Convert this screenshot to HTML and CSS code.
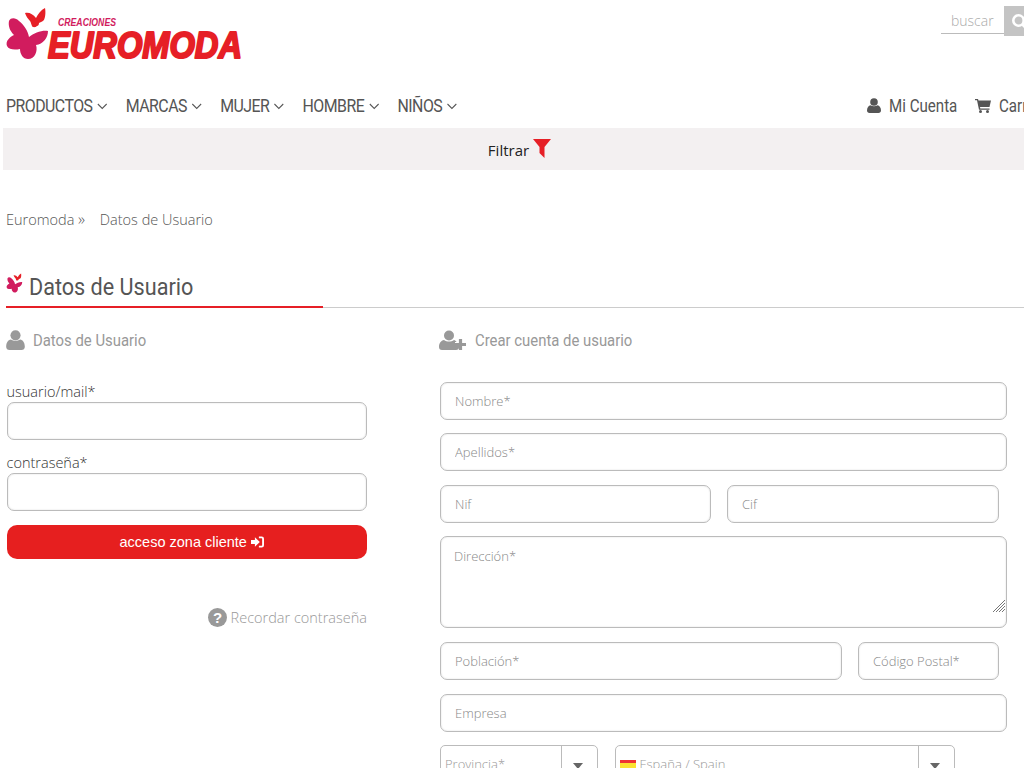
FILE: index.html
```html
<!DOCTYPE html>
<html lang="es">
<head>
    <meta charset="UTF-8">
    <title>Datos de Usuario | Euromoda</title>
    <link rel="stylesheet" href="styles.css">
</head>
<body>
    <header class="top">
        <svg class="logo" width="250" height="70" viewBox="0 0 250 70">
            <path fill="#d11c5e" d="M9 21C11 17 16 18 19 21C24 25 28 31 29 37C34 33 42 30 48 31C48 38 43 44 36 45C38 51 35 59 28 59C23 59 20 54 20 49C15 50 9 50 7 46C5 41 10 37 14 35C10 31 8 26 9 21Z"/>
            <path fill="#e61f26" d="M25 13C29 12 33 14 36 18C38 14 41 10 45 8C46 13 45 18 44 20C42 22 40 22 39 23C39 25 38 26 37 26C35 28 32 27 32 26C31 24 31 22 30 21C28 19 26 16 25 13Z"/>
            <text class="logo-small" x="58" y="26" textLength="58" lengthAdjust="spacingAndGlyphs">CREACIONES</text>
            <text class="logo-big" x="48" y="58" textLength="194" lengthAdjust="spacingAndGlyphs">EUROMODA</text>
        </svg>
        <div class="search">
            <span class="search-text">buscar</span>
            <span class="search-btn">
                <svg width="18" height="18" viewBox="0 0 18 18"><circle cx="7.500" cy="7.500" r="5.200" fill="none" stroke="#fff" stroke-width="2.600"/><path d="M11.500 11.500l5.500 5.500" stroke="#fff" stroke-width="3"/></svg>
            </span>
        </div>
    </header>

    <nav class="menu">
        <ul class="menu-main">
            <li>PRODUCTOS <svg class="chev" width="12" height="7" viewBox="0 0 12 7"><path d="M1 1l5 4.500L11 1" fill="none" stroke="#555" stroke-width="1.200"/></svg></li>
            <li>MARCAS <svg class="chev" width="12" height="7" viewBox="0 0 12 7"><path d="M1 1l5 4.500L11 1" fill="none" stroke="#555" stroke-width="1.200"/></svg></li>
            <li>MUJER <svg class="chev" width="12" height="7" viewBox="0 0 12 7"><path d="M1 1l5 4.500L11 1" fill="none" stroke="#555" stroke-width="1.200"/></svg></li>
            <li>HOMBRE <svg class="chev" width="12" height="7" viewBox="0 0 12 7"><path d="M1 1l5 4.500L11 1" fill="none" stroke="#555" stroke-width="1.200"/></svg></li>
            <li>NIÑOS <svg class="chev" width="12" height="7" viewBox="0 0 12 7"><path d="M1 1l5 4.500L11 1" fill="none" stroke="#555" stroke-width="1.200"/></svg></li>
        </ul>
        <div class="menu-user">
            <span class="menu-link">
                <svg width="14" height="15" viewBox="0 0 14 15"><circle cx="7" cy="4" r="3.800" fill="#555"/><path fill="#555" d="M0 12.500C0 9.500 1.500 7.500 3.500 7.200C5.500 8.600 8.500 8.600 10.500 7.200C12.500 7.500 14 9.500 14 12.500C14 14 13 15 11.500 15H2.500C1 15 0 14 0 12.500Z"/></svg>
                <span class="narrow link-account">Mi Cuenta</span>
            </span>
            <span class="menu-link">
                <svg width="16" height="15" viewBox="0 0 16 15"><path fill="#555" d="M0 1h3l.5 1.500H16l-1.500 6.500H5l.3 1.500h9.200v1.300H4L2 2.300H0Z"/><circle cx="5.500" cy="13.500" r="1.500" fill="#555"/><circle cx="12.500" cy="13.500" r="1.500" fill="#555"/></svg>
                <span class="narrow link-cart">Carrito</span>
            </span>
        </div>
    </nav>

    <div class="filter">
        <span>Filtrar</span>
        <svg width="18" height="19" viewBox="0 0 18 19"><path fill="#e61f26" d="M0 0h18L11.500 8v11L6.500 14V8Z"/></svg>
    </div>

    <p class="crumbs">Euromoda <span class="crumb-sep">»</span> <span class="crumb-now">Datos de Usuario</span></p>

    <div class="page-title">
        <h1>
            <svg width="17" height="20" viewBox="6 7 43 53"><path fill="#d11c5e" d="M9 21C11 17 16 18 19 21C24 25 28 31 29 37C34 33 42 30 48 31C48 38 43 44 36 45C38 51 35 59 28 59C23 59 20 54 20 49C15 50 9 50 7 46C5 41 10 37 14 35C10 31 8 26 9 21Z"/><path fill="#e61f26" d="M25 13C29 12 33 14 36 18C38 14 41 10 45 8C46 13 45 18 44 20C42 22 40 22 39 23C39 25 38 26 37 26C35 28 32 27 32 26C31 24 31 22 30 21C28 19 26 16 25 13Z"/></svg>
            <span class="narrow-title">Datos de Usuario</span>
        </h1>
    </div>

    <main class="columns">
        <section class="login">
            <h2>
                <svg width="19" height="20" viewBox="0 0 14 15"><circle cx="7" cy="4" r="3.800" fill="#999"/><path fill="#999" d="M0 12.500C0 9.500 1.500 7.500 3.500 7.200C5.500 8.600 8.500 8.600 10.500 7.200C12.500 7.500 14 9.500 14 12.500C14 14 13 15 11.500 15H2.500C1 15 0 14 0 12.500Z"/></svg>
                <span class="narrow-head">Datos de Usuario</span>
            </h2>
            <label class="field-label">usuario/mail*</label>
            <input class="box" type="text">
            <label class="field-label second">contraseña*</label>
            <input class="box" type="password">
            <button class="access" type="button">
                acceso zona cliente
                <svg width="13" height="12" viewBox="0 0 14 12"><path fill="#fff" d="M0 3.800h4.200V.8L9.500 6 4.200 11.200V8.200H0Z"/><path fill="none" stroke="#fff" stroke-width="2" d="M8.500 1H11.500C12.500 1 13 1.500 13 2.500V9.500C13 10.500 12.500 11 11.500 11H8.500"/></svg>
            </button>
            <p class="remember">
                <svg width="19" height="19" viewBox="0 0 19 19"><circle cx="9.500" cy="9.500" r="9.500" fill="#999"/><text class="q-mark" x="9.500" y="15">?</text></svg>
                Recordar contraseña
            </p>
        </section>

        <section class="signup">
            <h2>
                <svg width="28" height="20" viewBox="0 0 28 20"><circle cx="10" cy="5.500" r="5" fill="#999"/><path fill="#999" d="M0 17C0 13 2 10.500 5 10C8 12 12 12 15 10C16 10.300 17 11 17.500 12H16V14H20V17.500C20 19 19 20 17 20H3C1 20 0 19 0 17Z"/><path stroke="#999" stroke-width="3.200" d="M21.500 9v11M16 14.500h11"/></svg>
                <span class="narrow-head">Crear cuenta de usuario</span>
            </h2>
            <input class="box full" type="text" placeholder="Nombre*">
            <input class="box full" type="text" placeholder="Apellidos*">
            <div class="row">
                <input class="box w-nif" type="text" placeholder="Nif">
                <input class="box w-cif" type="text" placeholder="Cif">
            </div>
            <div class="area-wrap">
                <textarea class="box full area" placeholder="Dirección*"></textarea>
                <svg class="grip" width="14" height="14" viewBox="0 0 14 14"><path d="M13 1L1 13M13 4L4 13M13 7L7 13M13 10L10 13" stroke="#777" stroke-width="1"/></svg>
            </div>
            <div class="row">
                <input class="box w-pob" type="text" placeholder="Población*">
                <input class="box w-cp" type="text" placeholder="Código Postal*">
            </div>
            <input class="box full" type="text" placeholder="Empresa">
            <div class="row">
                <div class="picker w-prov">
                    <span class="picker-text">Provincia*</span>
                    <span class="picker-arrow"></span>
                </div>
                <div class="picker w-pais">
                    <span class="picker-text">
                        <svg class="flag" width="16" height="11" viewBox="0 0 16 11"><rect width="16" height="11" fill="#ee3333"/><rect y="3" width="16" height="5" fill="#fbe231"/></svg>
                        España / Spain
                    </span>
                    <span class="picker-arrow"></span>
                </div>
            </div>
        </section>
    </main>
</body>
</html>
```

FILE: styles.css
```css
html, body {
    height: 768px;
    overflow: hidden;
}

body {
    margin: 0;
    width: 1024px;
    background-color: #fff;
    color: #555;
    font-family: "Open Sans", sans-serif;
}

/* header */
.top {
    display: flex;
    justify-content: space-between;
    height: 85px;
}

.logo {
    display: block;
}

.logo-small {
    font: italic bold 11px "Liberation Sans", sans-serif;
    fill: #d11c5e;
}

.logo-big {
    font: italic bold 37px "Liberation Sans", sans-serif;
    fill: #e61f26;
    stroke: #e61f26;
    stroke-width: 2.200px;
    stroke-linejoin: round;
}

.search {
    display: flex;
    align-items: flex-start;
    padding-top: 6px;
    height: 30px;
}

.search-text {
    width: 63px;
    height: 28px;
    box-sizing: border-box;
    padding: 5px 0 0 10px;
    border-bottom: 1px solid #bbb;
    color: #aaa;
    font-size: 14px;
    font-weight: 300;
}

.search-btn {
    width: 20px;
    height: 30px;
    overflow: hidden;
    padding: 7px 0 0 7px;
    box-sizing: border-box;
    background-color: #c4c4c4;
}

.menu {
    display: flex;
    justify-content: space-between;
    height: 43px;
    padding-left: 6px;
    font-family: Roboto, sans-serif;
    font-size: 18px;
    white-space: nowrap;
}

/* the menu type is condensed in the original */
.menu-main {
    display: flex;
    gap: 20.800px;
    list-style: none;
    margin: 0;
    padding: 10px 0 0;
    letter-spacing: -0.6px;
    transform: scaleX(0.883);
    transform-origin: left top;
}

.chev {
    vertical-align: 2px;
    margin-left: 1px;
}

.menu-user {
    display: flex;
    gap: 18px;
    width: 157px;
    padding-top: 10px;
    flex-shrink: 0;
}

.menu-link {
    display: flex;
    align-items: center;
    height: 21px;
    gap: 8px;
}

.narrow {
    display: inline-block;
    transform: scaleX(0.84);
    transform-origin: left center;
}

.link-account {
    width: 68px;
}

.link-cart {
    width: 60px;
}

.filter {
    display: flex;
    justify-content: center;
    align-items: center;
    gap: 4px;
    height: 42px;
    margin-left: 3px;
    padding-left: 12px;
    background-color: #f3f0f1;
    color: #222;
    font-size: 15px;
}

.filter span {
    margin-top: 2px;
}

.filter svg {
    margin-top: -1px;
}

.crumbs {
    margin: 0;
    padding: 39px 0 0 6px;
    height: 41px;
    font-size: 14.500px;
    font-weight: 300;
    line-height: 20px;
}

.crumb-sep {
    font-size: 16px;
}

.crumb-now {
    margin-left: 11px;
}

.page-title {
    margin-top: 15px;
    margin-left: 6px;
    border-bottom: 1px solid #ccc;
}

.page-title h1 {
    display: inline-flex;
    align-items: center;
    gap: 6px;
    width: 317px;
    box-sizing: border-box;
    height: 43px;
    margin: 0 0 -1px;
    padding-top: 2px;
    border-bottom: 2px solid #e61f26;
    font-family: Roboto, sans-serif;
    font-size: 24px;
    font-weight: 400;
    vertical-align: top;
}

.page-title h1 svg {
    margin-top: -8px;
}

.narrow-title {
    display: inline-block;
    transform: scaleX(0.9);
    transform-origin: left center;
}

/* columns */
.columns {
    display: flex;
    gap: 73px;
    padding-left: 6.500px;
}

.login {
    width: 360.500px;
    flex-shrink: 0;
}

.signup {
    width: 568px;
    flex-shrink: 0;
}

.login h2, .signup h2 {
    display: flex;
    align-items: center;
    gap: 8px;
    height: 20px;
    margin: 22px 0 0 -1px;
    color: #999;
    font-family: Roboto, sans-serif;
    font-size: 16px;
    font-weight: 400;
    white-space: nowrap;
}

.signup h2 {
    margin-bottom: 31.750px;
}

.narrow-head {
    display: inline-block;
    transform: scaleX(0.93);
    transform-origin: left center;
}

.field-label {
    display: block;
    margin-top: 32px;
    height: 20px;
    font-size: 14.500px;
    font-weight: 300;
    line-height: 20px;
    color: #333;
}

.field-label.second {
    margin-top: 13px;
}

.box {
    display: block;
    box-sizing: border-box;
    width: 360.500px;
    height: 38px;
    margin: 0;
    padding: 0 14px;
    border: 1px solid #bbb;
    border-radius: 7px;
    background: #fff;
    font-family: "Open Sans", sans-serif;
    font-size: 13px;
    font-weight: 300;
    outline: none;
    box-shadow: inset 0 0 2px #ddd;
}

.box::placeholder {
    color: #888;
}

.full {
    width: 567px;
    margin-bottom: 13.500px;
}

.area-wrap {
    position: relative;
}

.area {
    height: 92px;
    margin-bottom: 14px;
    padding: 10px 13px;
    resize: none;
}

.grip {
    position: absolute;
    right: 2px;
    bottom: 15px;
}

.row {
    display: flex;
    gap: 16px;
    margin-bottom: 13.500px;
}

.w-nif { width: 271px; }
.w-cif { width: 272px; }
.w-pob { width: 402px; }
.w-cp { width: 141px; }
.w-prov { width: 158px; }
.w-pais { width: 340px; margin-left: 1px; }

.access {
    display: block;
    width: 360.500px;
    height: 34px;
    margin-top: 14px;
    padding: 0 0 0 10px;
    border: none;
    border-radius: 10px;
    background-color: #e61f1f;
    color: #fff;
    font-family: "Liberation Sans", sans-serif;
    font-size: 14.500px;
    cursor: pointer;
}

.access svg {
    vertical-align: -1px;
}

.remember {
    display: flex;
    justify-content: flex-end;
    align-items: center;
    gap: 4px;
    margin: 49px 0 0;
    color: #999;
    font-size: 14.500px;
    font-weight: 300;
}

.q-mark {
    font: bold 15px "Liberation Sans", sans-serif;
    fill: #fff;
    text-anchor: middle;
}

.picker {
    display: flex;
    box-sizing: border-box;
    height: 38px;
    border: 1px solid #bbb;
    border-radius: 5px;
    color: #999;
    font-size: 13px;
    font-weight: 300;
}

.picker-text {
    flex: 1;
    padding: 9px 0 0 4px;
    white-space: nowrap;
}

.flag {
    vertical-align: -2px;
}

.picker-arrow {
    position: relative;
    width: 35px;
    border-left: 1px solid #bbb;
}

.picker-arrow::after {
    content: "";
    position: absolute;
    left: 11px;
    top: 17px;
    border: 5px solid transparent;
    border-top: 6px solid #666;
}
```
